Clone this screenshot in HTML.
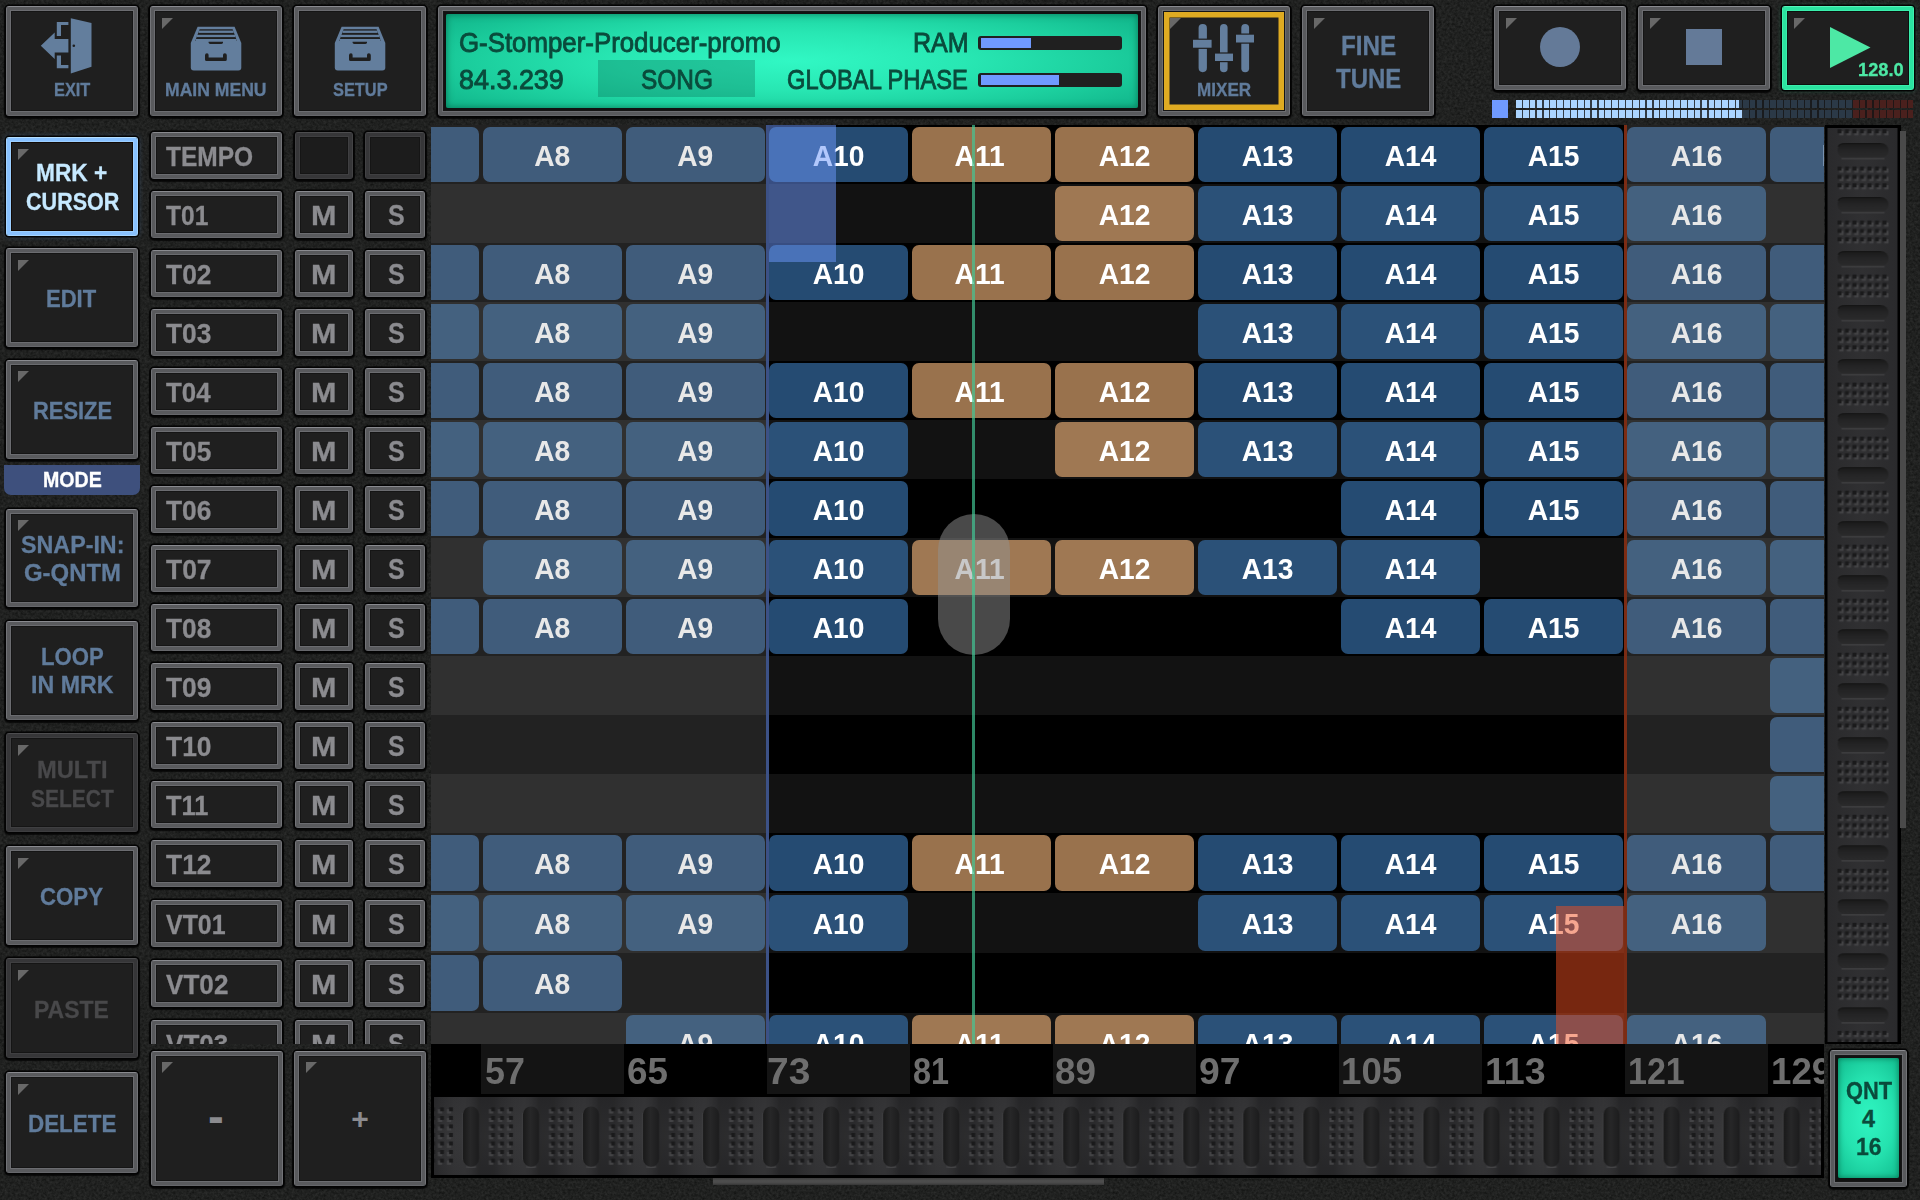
<!DOCTYPE html><html><head><meta charset="utf-8"><title>G-Stomper Song</title><style>
*{margin:0;padding:0;box-sizing:border-box}
html,body{width:1920px;height:1200px;overflow:hidden;background:#202121}
body{position:relative;font-family:"Liberation Sans",sans-serif;font-weight:bold;color:#607b9b}
#bg{position:absolute;left:0;top:0;width:1920px;height:1200px}
.b{position:absolute;background:#1f1f1f;border:1px solid #727377;border-top-color:#898a8f;border-bottom-color:#66676b;border-radius:3px;box-shadow:0 0 0 1.5px #030303,0 1px 1px 2px rgba(5,5,5,.8),inset 0 0 0 3px #595a5d,inset 0 0 0 4px #6b6c70,inset 0 0 0 5px #151515}
.b.dis{border-color:#434345;border-top-color:#4d4d4f;border-bottom-color:#3e3e40;box-shadow:0 0 0 1.5px #030303,0 1px 1px 2px rgba(5,5,5,.8),inset 0 0 0 3px #363638,inset 0 0 0 4px #3f3f41,inset 0 0 0 5px #151515}
.b.sel{border-color:#a4d4ff;border-top-color:#b4deff;border-bottom-color:#a4d4ff;box-shadow:0 0 0 1.5px #030303,0 0 5px 1px rgba(120,180,255,.3),inset 0 0 0 3px #88c1ff,inset 0 0 0 4px #9ccfff,inset 0 0 0 5px #120a05}
.b.yel{box-shadow:0 0 0 1.5px #030303,0 1px 1px 2px rgba(5,5,5,.8),inset 0 0 0 3px #595a5d,inset 0 0 0 4px #6b6c70,inset 0 0 0 5px #151515,inset 0 0 0 10.5px #dfab22}
.b.grn{border-color:#3ff0ae;border-top-color:#55f5ba;border-bottom-color:#3ff0ae;box-shadow:0 0 0 1.5px #030303,0 0 4px 1px rgba(60,240,170,.25),inset 0 0 0 3px #2be3a0,inset 0 0 0 4px #3aeeac,inset 0 0 0 5px #0a120e}
.tri{position:absolute;left:10.7px;top:10.7px;width:0;height:0;border-top:11.5px solid #686868;border-right:11.5px solid transparent}
.t{position:absolute;white-space:nowrap;transform-origin:0 0;line-height:1}
.ic{position:absolute;left:4px;top:4px}
#grid{position:absolute;left:431px;top:125px;width:1393px;height:919px;overflow:hidden;background:#262626}
.row{position:absolute;left:0;width:1393px;height:59px}
.blk{position:absolute;height:55px;width:139px;border-radius:7px;color:#e4e4e4;font-size:30px;line-height:57.6px;text-align:center;overflow:hidden}
.blk span{display:inline-block;transform:scaleX(.94)}
.lb{background:#405c7b;color:#e8e8e8}
.db{background:#254b72;color:#fff}
.or{background:#99724d;color:#fff}
.lb.o{background:#44617f}
.db.o{background:#2b5178}
.or.o{background:#9f7853}
#tracks{position:absolute;left:145px;top:125px;width:286px;height:919px;overflow:hidden}
#ruler{position:absolute;left:431px;top:1044px;width:1393px;height:50px;overflow:hidden;background:#000}
</style></head><body>
<svg id="bg" width="1920" height="1200"><defs>
<filter id="nz" x="0" y="0" width="100%" height="100%" color-interpolation-filters="sRGB"><feTurbulence type="fractalNoise" baseFrequency="0.38" numOctaves="3" seed="7"/><feColorMatrix type="matrix" values="0.13 0 0 0 0.061  0.13 0 0 0 0.065  0.13 0 0 0 0.061  0 0 0 0 1"/></filter>
</defs><rect width="1920" height="1200" fill="#222322" filter="url(#nz)"/></svg>
<div class="b " style="left:6px;top:6px;width:132px;height:110px"><svg class="ic" width="122" height="100" viewBox="11 11 122 100"><g fill="#637e9d">
<polygon points="70.8,18.2 91.5,23.1 91.5,66.7 70.8,73.4"/>
<polygon points="40.8,45.7 54.7,32.6 54.7,39 68.4,39 68.4,52.6 54.7,52.6 54.7,59"/>
<path d="M56.8 21.9H68.4V25.1H61V36H56.8Z"/>
<path d="M56.8 68.3H68.4V64.9H61V55.6H56.8Z"/></g>
<circle cx="73.8" cy="45.7" r="1.3" fill="#1f1f1f"/></svg></div>
<div class="t" style="left:53.61px;top:81.57px;font-size:17.76px;transform:scaleX(0.921);-webkit-text-stroke:0.3px;">EXIT</div>
<div class="b " style="left:150px;top:6px;width:132px;height:110px"><i class="tri"></i><svg class="ic" width="122" height="100" viewBox="155 11 122 100"><g fill="#637e9d">
<path d="M197.6 26.8H234.6L241.3 43V67.6Q241.3 70.6 238.3 70.6H193.8Q190.8 70.6 190.8 67.6V43Z"/></g>
<path d="M199.6 29.2H232.6L237 41H195.2Z" fill="#1f1f1f"/>
<g fill="#637e9d"><rect x="198.6" y="30.6" width="35" height="2.3"/><rect x="197" y="34.8" width="38.2" height="2.3"/><rect x="195.6" y="39" width="41" height="2.3"/></g>
<path d="M208.6 41.8H223V42.6Q223 44 221.4 44H210.2Q208.6 44 208.6 42.6Z" fill="#1f1f1f"/>
<path d="M205 55.2Q205 53.2 207 53.2Q208.6 53.2 208.6 55V57.4H223V55Q223 53.2 224.8 53.2Q226.8 53.2 226.8 55.2V59.4Q226.8 61 225.2 61H206.6Q205 61 205 59.4Z" fill="#1f1f1f"/>
</svg></div>
<div class="t" style="left:165.33px;top:81.69px;font-size:17.61px;transform:scaleX(0.998);-webkit-text-stroke:0.3px;">MAIN MENU</div>
<div class="b " style="left:294px;top:6px;width:132px;height:110px"><svg class="ic" width="122" height="100" viewBox="155 11 122 100"><g fill="#637e9d">
<path d="M197.6 26.8H234.6L241.3 43V67.6Q241.3 70.6 238.3 70.6H193.8Q190.8 70.6 190.8 67.6V43Z"/></g>
<path d="M199.6 29.2H232.6L237 41H195.2Z" fill="#1f1f1f"/>
<g fill="#637e9d"><rect x="198.6" y="30.6" width="35" height="2.3"/><rect x="197" y="34.8" width="38.2" height="2.3"/><rect x="195.6" y="39" width="41" height="2.3"/></g>
<path d="M208.6 41.8H223V42.6Q223 44 221.4 44H210.2Q208.6 44 208.6 42.6Z" fill="#1f1f1f"/>
<path d="M205 55.2Q205 53.2 207 53.2Q208.6 53.2 208.6 55V57.4H223V55Q223 53.2 224.8 53.2Q226.8 53.2 226.8 55.2V59.4Q226.8 61 225.2 61H206.6Q205 61 205 59.4Z" fill="#1f1f1f"/>
</svg></div>
<div class="t" style="left:332.91px;top:81.69px;font-size:17.61px;transform:scaleX(0.929);-webkit-text-stroke:0.3px;">SETUP</div>
<div class="b" style="left:438px;top:6px;width:708px;height:110px;background:#111"></div>
<div id="lcd" style="position:absolute;left:446px;top:14px;width:692px;height:94px;border-radius:2px;color:#0a4b3c;
background:radial-gradient(ellipse 76% 92% at 50% 50%,#31f8c4 0%,#28e7b3 33%,#1ccf9e 60%,#10b389 86%,#0aa57c 100%);box-shadow:inset 0 0 6px 1px rgba(0,90,60,.55)">
<div style="position:absolute;left:152px;top:46px;width:157px;height:37px;background:rgba(10,110,85,.33)"></div>
<div style="position:absolute;left:532px;top:22px;width:144px;height:14px;border-radius:3px;background:#202020"><div style="position:absolute;left:3px;top:2px;width:50px;height:10px;background:#709aff"></div></div>
<div style="position:absolute;left:532px;top:59px;width:144px;height:14px;border-radius:3px;background:#202020"><div style="position:absolute;left:3px;top:2px;width:78px;height:10px;background:#709aff"></div></div>
<div class="t" style="left:12.61px;top:14.62px;font-size:28.09px;transform:scaleX(0.920);color:#0a4b3c;font-weight:normal;-webkit-text-stroke:0.9px;">G-Stomper-Producer-promo</div>
<div class="t" style="left:12.73px;top:52.18px;font-size:27.07px;transform:scaleX(0.995);color:#0a4b3c;font-weight:normal;-webkit-text-stroke:0.9px;">84.3.239</div>
<div class="t" style="left:194.66px;top:51.74px;font-size:27.95px;transform:scaleX(0.874);color:#0a4b3c;font-weight:normal;-webkit-text-stroke:0.9px;">SONG</div>
<div class="t" style="left:467.31px;top:14.37px;font-size:28.38px;transform:scaleX(0.884);color:#0a4b3c;font-weight:normal;-webkit-text-stroke:0.9px;">RAM</div>
<div class="t" style="left:341.01px;top:51.74px;font-size:27.95px;transform:scaleX(0.848);color:#0a4b3c;font-weight:normal;-webkit-text-stroke:0.9px;">GLOBAL PHASE</div>
</div>
<div class="b yel" style="left:1158px;top:6px;width:132px;height:110px"><i class="tri"></i><svg class="ic" width="122" height="100" viewBox="1163 11 122 100"><g fill="#637e9d">
<rect x="1198.6" y="23.9" width="8.3" height="48.3" rx="4.1"/><rect x="1220" y="23.9" width="7.6" height="48.3" rx="3.8"/><rect x="1241.3" y="23.9" width="7.8" height="48.3" rx="3.9"/></g>
<g fill="#1f1f1f"><rect x="1193" y="38.6" width="18.6" height="10.3"/><rect x="1215" y="52.4" width="18" height="9.8"/><rect x="1236" y="33.5" width="18" height="10.2"/></g>
<g fill="#637e9d"><rect x="1193" y="39.8" width="18.6" height="7.9"/><rect x="1215" y="53.6" width="18" height="7.4"/><rect x="1236" y="34.7" width="18" height="7.8"/></g></svg></div>
<div class="t" style="left:1197.46px;top:81.69px;font-size:17.61px;transform:scaleX(0.971);-webkit-text-stroke:0.3px;">MIXER</div>
<div class="b " style="left:1302px;top:6px;width:132px;height:110px"><i class="tri"></i></div>
<div class="t" style="left:1340.68px;top:32.93px;font-size:26.78px;transform:scaleX(0.907);-webkit-text-stroke:0.3px;">FINE</div>
<div class="t" style="left:1336.26px;top:64.58px;font-size:27.07px;transform:scaleX(0.886);-webkit-text-stroke:0.3px;">TUNE</div>
<div class="b " style="left:1494px;top:6px;width:132px;height:84px"><i class="tri"></i><div style="position:absolute;left:45px;top:20px;width:40px;height:40px;border-radius:50%;background:#647a98"></div></div>
<div class="b " style="left:1638px;top:6px;width:132px;height:84px"><i class="tri"></i><div style="position:absolute;left:47px;top:22px;width:36px;height:36px;background:#647a98"></div></div>
<div class="b grn" style="left:1782px;top:6px;width:132px;height:84px"><i class="tri"></i><svg class="ic" width="122" height="74" viewBox="1787 11 122 74"><polygon points="1830,27 1870.5,47.5 1830,68" fill="#4de8a5"/></svg></div>
<div class="t" style="left:1857.84px;top:61.81px;font-size:17.47px;transform:scaleX(1.045);color:#4de8a5;-webkit-text-stroke:0.3px;">128.0</div>
<div style="position:absolute;left:1492px;top:100px;width:16px;height:18px;background:#709aff"></div>
<div style="position:absolute;left:1515.7px;top:100px;width:397.55px;height:8px;background:repeating-linear-gradient(90deg,rgba(0,0,0,0) 0,rgba(0,0,0,0) 5.7px,rgba(20,20,20,.8) 5.7px,rgba(20,20,20,.8) 6.875px),linear-gradient(90deg,#abd4ff 0,#abd4ff 223.438px,#2b3947 223.438px,#2b3947 336.875px,#4a201d 336.875px)"></div>
<div style="position:absolute;left:1515.7px;top:110px;width:397.55px;height:8px;background:repeating-linear-gradient(90deg,rgba(0,0,0,0) 0,rgba(0,0,0,0) 5.7px,rgba(20,20,20,.8) 5.7px,rgba(20,20,20,.8) 6.875px),linear-gradient(90deg,#abd4ff 0,#abd4ff 226.875px,#2b3947 226.875px,#2b3947 336.875px,#4a201d 336.875px)"></div>
<div class="b sel" style="left:6px;top:137px;width:132px;height:99px"><i class="tri"></i></div>
<div class="t" style="left:36.49px;top:161.15px;font-size:24.16px;transform:scaleX(0.939);color:#c6e9ff;-webkit-text-stroke:0.3px;">MRK +</div>
<div class="t" style="left:25.74px;top:190.22px;font-size:24.31px;transform:scaleX(0.887);color:#c6e9ff;-webkit-text-stroke:0.3px;">CURSOR</div>
<div class="b " style="left:6px;top:248px;width:132px;height:99px"><i class="tri"></i></div>
<div class="t" style="left:46.23px;top:287.00px;font-size:24.45px;transform:scaleX(0.902);-webkit-text-stroke:0.3px;">EDIT</div>
<div class="b " style="left:6px;top:359.5px;width:132px;height:99px"><i class="tri"></i></div>
<div class="t" style="left:33.34px;top:398.50px;font-size:24.45px;transform:scaleX(0.896);-webkit-text-stroke:0.3px;">RESIZE</div>
<div style="position:absolute;left:4px;top:465px;width:136px;height:30px;border-radius:0 0 7px 7px;background:#3e507d"></div>
<div class="t" style="left:42.69px;top:469.15px;font-size:22.27px;transform:scaleX(0.881);color:#fff;-webkit-text-stroke:0.3px;">MODE</div>
<div class="b " style="left:6px;top:508.5px;width:132px;height:98.5px"><i class="tri"></i></div>
<div class="t" style="left:21.30px;top:534.34px;font-size:23.58px;transform:scaleX(0.987);-webkit-text-stroke:0.3px;">SNAP-IN:</div>
<div class="t" style="left:24.04px;top:562.12px;font-size:23.73px;transform:scaleX(1.008);-webkit-text-stroke:0.3px;">G-QNTM</div>
<div class="b " style="left:6px;top:621px;width:132px;height:98.5px"></div>
<div class="t" style="left:41.02px;top:644.59px;font-size:23.87px;transform:scaleX(0.927);-webkit-text-stroke:0.3px;">LOOP</div>
<div class="t" style="left:31.45px;top:673.29px;font-size:23.87px;transform:scaleX(0.972);-webkit-text-stroke:0.3px;">IN MRK</div>
<div class="b dis" style="left:6px;top:733px;width:132px;height:99px"><i class="tri"></i></div>
<div class="t" style="left:37.22px;top:757.85px;font-size:24.16px;transform:scaleX(0.980);color:#48484a;-webkit-text-stroke:0.3px;">MULTI</div>
<div class="t" style="left:31.17px;top:786.65px;font-size:24.16px;transform:scaleX(0.868);color:#48484a;-webkit-text-stroke:0.3px;">SELECT</div>
<div class="b " style="left:6px;top:846px;width:132px;height:98.5px"><i class="tri"></i></div>
<div class="t" style="left:40.41px;top:884.60px;font-size:24.45px;transform:scaleX(0.909);-webkit-text-stroke:0.3px;">COPY</div>
<div class="b dis" style="left:6px;top:958px;width:132px;height:100px"><i class="tri"></i></div>
<div class="t" style="left:33.97px;top:997.82px;font-size:24.31px;transform:scaleX(0.946);color:#48484a;-webkit-text-stroke:0.3px;">PASTE</div>
<div class="b " style="left:6px;top:1072px;width:132px;height:101px"><i class="tri"></i></div>
<div class="t" style="left:28.01px;top:1111.62px;font-size:24.31px;transform:scaleX(0.922);-webkit-text-stroke:0.3px;">DELETE</div>
<div id="tracks">
<div class="b" style="left:6px;top:6.5px;width:131px;height:47px"></div>
<div class="t" style="left:20.55px;top:17.17px;font-size:28.38px;transform:scaleX(0.864);color:#8b8b8f;-webkit-text-stroke:0.3px;">TEMPO</div>
<div class="b dis" style="left:149.5px;top:6.5px;width:58.5px;height:47px;background:#1c1c1c"></div>
<div class="b dis" style="left:220px;top:6.5px;width:60px;height:47px;background:#1c1c1c"></div>
<div class="b" style="left:6px;top:65.5px;width:131px;height:47px"></div>
<div class="t" style="left:20.55px;top:76.17px;font-size:28.38px;transform:scaleX(0.866);color:#8b8b8f;-webkit-text-stroke:0.3px;">T01</div>
<div class="b" style="left:149.5px;top:65.5px;width:58.5px;height:47px"></div>
<div class="b" style="left:220px;top:65.5px;width:60px;height:47px"></div>
<div class="t" style="left:166.06px;top:76.17px;font-size:28.38px;transform:scaleX(1.077);color:#8b8b8f;-webkit-text-stroke:0.3px;">M</div>
<div class="t" style="left:242.65px;top:75.73px;font-size:29.26px;transform:scaleX(0.854);color:#8b8b8f;-webkit-text-stroke:0.3px;">S</div>
<div class="b" style="left:6px;top:124.5px;width:131px;height:47px"></div>
<div class="t" style="left:20.54px;top:135.17px;font-size:28.38px;transform:scaleX(0.931);color:#8b8b8f;-webkit-text-stroke:0.3px;">T02</div>
<div class="b" style="left:149.5px;top:124.5px;width:58.5px;height:47px"></div>
<div class="b" style="left:220px;top:124.5px;width:60px;height:47px"></div>
<div class="t" style="left:166.06px;top:135.17px;font-size:28.38px;transform:scaleX(1.077);color:#8b8b8f;-webkit-text-stroke:0.3px;">M</div>
<div class="t" style="left:242.65px;top:134.73px;font-size:29.26px;transform:scaleX(0.854);color:#8b8b8f;-webkit-text-stroke:0.3px;">S</div>
<div class="b" style="left:6px;top:183.5px;width:131px;height:47px"></div>
<div class="t" style="left:20.54px;top:194.17px;font-size:28.38px;transform:scaleX(0.929);color:#8b8b8f;-webkit-text-stroke:0.3px;">T03</div>
<div class="b" style="left:149.5px;top:183.5px;width:58.5px;height:47px"></div>
<div class="b" style="left:220px;top:183.5px;width:60px;height:47px"></div>
<div class="t" style="left:166.06px;top:194.17px;font-size:28.38px;transform:scaleX(1.077);color:#8b8b8f;-webkit-text-stroke:0.3px;">M</div>
<div class="t" style="left:242.65px;top:193.73px;font-size:29.26px;transform:scaleX(0.854);color:#8b8b8f;-webkit-text-stroke:0.3px;">S</div>
<div class="b" style="left:6px;top:242.5px;width:131px;height:47px"></div>
<div class="t" style="left:20.54px;top:253.17px;font-size:28.38px;transform:scaleX(0.912);color:#8b8b8f;-webkit-text-stroke:0.3px;">T04</div>
<div class="b" style="left:149.5px;top:242.5px;width:58.5px;height:47px"></div>
<div class="b" style="left:220px;top:242.5px;width:60px;height:47px"></div>
<div class="t" style="left:166.06px;top:253.17px;font-size:28.38px;transform:scaleX(1.077);color:#8b8b8f;-webkit-text-stroke:0.3px;">M</div>
<div class="t" style="left:242.65px;top:252.73px;font-size:29.26px;transform:scaleX(0.854);color:#8b8b8f;-webkit-text-stroke:0.3px;">S</div>
<div class="b" style="left:6px;top:301.5px;width:131px;height:47px"></div>
<div class="t" style="left:20.54px;top:312.17px;font-size:28.38px;transform:scaleX(0.925);color:#8b8b8f;-webkit-text-stroke:0.3px;">T05</div>
<div class="b" style="left:149.5px;top:301.5px;width:58.5px;height:47px"></div>
<div class="b" style="left:220px;top:301.5px;width:60px;height:47px"></div>
<div class="t" style="left:166.06px;top:312.17px;font-size:28.38px;transform:scaleX(1.077);color:#8b8b8f;-webkit-text-stroke:0.3px;">M</div>
<div class="t" style="left:242.65px;top:311.73px;font-size:29.26px;transform:scaleX(0.854);color:#8b8b8f;-webkit-text-stroke:0.3px;">S</div>
<div class="b" style="left:6px;top:360.5px;width:131px;height:47px"></div>
<div class="t" style="left:20.54px;top:371.17px;font-size:28.38px;transform:scaleX(0.929);color:#8b8b8f;-webkit-text-stroke:0.3px;">T06</div>
<div class="b" style="left:149.5px;top:360.5px;width:58.5px;height:47px"></div>
<div class="b" style="left:220px;top:360.5px;width:60px;height:47px"></div>
<div class="t" style="left:166.06px;top:371.17px;font-size:28.38px;transform:scaleX(1.077);color:#8b8b8f;-webkit-text-stroke:0.3px;">M</div>
<div class="t" style="left:242.65px;top:370.73px;font-size:29.26px;transform:scaleX(0.854);color:#8b8b8f;-webkit-text-stroke:0.3px;">S</div>
<div class="b" style="left:6px;top:419.5px;width:131px;height:47px"></div>
<div class="t" style="left:20.54px;top:430.17px;font-size:28.38px;transform:scaleX(0.932);color:#8b8b8f;-webkit-text-stroke:0.3px;">T07</div>
<div class="b" style="left:149.5px;top:419.5px;width:58.5px;height:47px"></div>
<div class="b" style="left:220px;top:419.5px;width:60px;height:47px"></div>
<div class="t" style="left:166.06px;top:430.17px;font-size:28.38px;transform:scaleX(1.077);color:#8b8b8f;-webkit-text-stroke:0.3px;">M</div>
<div class="t" style="left:242.65px;top:429.73px;font-size:29.26px;transform:scaleX(0.854);color:#8b8b8f;-webkit-text-stroke:0.3px;">S</div>
<div class="b" style="left:6px;top:478.5px;width:131px;height:47px"></div>
<div class="t" style="left:20.54px;top:489.17px;font-size:28.38px;transform:scaleX(0.925);color:#8b8b8f;-webkit-text-stroke:0.3px;">T08</div>
<div class="b" style="left:149.5px;top:478.5px;width:58.5px;height:47px"></div>
<div class="b" style="left:220px;top:478.5px;width:60px;height:47px"></div>
<div class="t" style="left:166.06px;top:489.17px;font-size:28.38px;transform:scaleX(1.077);color:#8b8b8f;-webkit-text-stroke:0.3px;">M</div>
<div class="t" style="left:242.65px;top:488.73px;font-size:29.26px;transform:scaleX(0.854);color:#8b8b8f;-webkit-text-stroke:0.3px;">S</div>
<div class="b" style="left:6px;top:537.5px;width:131px;height:47px"></div>
<div class="t" style="left:20.54px;top:548.17px;font-size:28.38px;transform:scaleX(0.929);color:#8b8b8f;-webkit-text-stroke:0.3px;">T09</div>
<div class="b" style="left:149.5px;top:537.5px;width:58.5px;height:47px"></div>
<div class="b" style="left:220px;top:537.5px;width:60px;height:47px"></div>
<div class="t" style="left:166.06px;top:548.17px;font-size:28.38px;transform:scaleX(1.077);color:#8b8b8f;-webkit-text-stroke:0.3px;">M</div>
<div class="t" style="left:242.65px;top:547.73px;font-size:29.26px;transform:scaleX(0.854);color:#8b8b8f;-webkit-text-stroke:0.3px;">S</div>
<div class="b" style="left:6px;top:596.5px;width:131px;height:47px"></div>
<div class="t" style="left:20.54px;top:607.17px;font-size:28.38px;transform:scaleX(0.931);color:#8b8b8f;-webkit-text-stroke:0.3px;">T10</div>
<div class="b" style="left:149.5px;top:596.5px;width:58.5px;height:47px"></div>
<div class="b" style="left:220px;top:596.5px;width:60px;height:47px"></div>
<div class="t" style="left:166.06px;top:607.17px;font-size:28.38px;transform:scaleX(1.077);color:#8b8b8f;-webkit-text-stroke:0.3px;">M</div>
<div class="t" style="left:242.65px;top:606.73px;font-size:29.26px;transform:scaleX(0.854);color:#8b8b8f;-webkit-text-stroke:0.3px;">S</div>
<div class="b" style="left:6px;top:655.5px;width:131px;height:47px"></div>
<div class="t" style="left:20.55px;top:666.17px;font-size:28.38px;transform:scaleX(0.895);color:#8b8b8f;-webkit-text-stroke:0.3px;">T11</div>
<div class="b" style="left:149.5px;top:655.5px;width:58.5px;height:47px"></div>
<div class="b" style="left:220px;top:655.5px;width:60px;height:47px"></div>
<div class="t" style="left:166.06px;top:666.17px;font-size:28.38px;transform:scaleX(1.077);color:#8b8b8f;-webkit-text-stroke:0.3px;">M</div>
<div class="t" style="left:242.65px;top:665.73px;font-size:29.26px;transform:scaleX(0.854);color:#8b8b8f;-webkit-text-stroke:0.3px;">S</div>
<div class="b" style="left:6px;top:714.5px;width:131px;height:47px"></div>
<div class="t" style="left:20.54px;top:725.17px;font-size:28.38px;transform:scaleX(0.931);color:#8b8b8f;-webkit-text-stroke:0.3px;">T12</div>
<div class="b" style="left:149.5px;top:714.5px;width:58.5px;height:47px"></div>
<div class="b" style="left:220px;top:714.5px;width:60px;height:47px"></div>
<div class="t" style="left:166.06px;top:725.17px;font-size:28.38px;transform:scaleX(1.077);color:#8b8b8f;-webkit-text-stroke:0.3px;">M</div>
<div class="t" style="left:242.65px;top:724.73px;font-size:29.26px;transform:scaleX(0.854);color:#8b8b8f;-webkit-text-stroke:0.3px;">S</div>
<div class="b" style="left:6px;top:774.5px;width:131px;height:47.7px"></div>
<div class="t" style="left:20.63px;top:785.17px;font-size:28.38px;transform:scaleX(0.879);color:#8b8b8f;-webkit-text-stroke:0.3px;">VT01</div>
<div class="b" style="left:149.5px;top:774.5px;width:58.5px;height:47.7px"></div>
<div class="b" style="left:220px;top:774.5px;width:60px;height:47.7px"></div>
<div class="t" style="left:166.06px;top:785.17px;font-size:28.38px;transform:scaleX(1.077);color:#8b8b8f;-webkit-text-stroke:0.3px;">M</div>
<div class="t" style="left:242.65px;top:784.73px;font-size:29.26px;transform:scaleX(0.854);color:#8b8b8f;-webkit-text-stroke:0.3px;">S</div>
<div class="b" style="left:6px;top:834.5px;width:131px;height:47.7px"></div>
<div class="t" style="left:20.63px;top:845.17px;font-size:28.38px;transform:scaleX(0.920);color:#8b8b8f;-webkit-text-stroke:0.3px;">VT02</div>
<div class="b" style="left:149.5px;top:834.5px;width:58.5px;height:47.7px"></div>
<div class="b" style="left:220px;top:834.5px;width:60px;height:47.7px"></div>
<div class="t" style="left:166.06px;top:845.17px;font-size:28.38px;transform:scaleX(1.077);color:#8b8b8f;-webkit-text-stroke:0.3px;">M</div>
<div class="t" style="left:242.65px;top:844.73px;font-size:29.26px;transform:scaleX(0.854);color:#8b8b8f;-webkit-text-stroke:0.3px;">S</div>
<div class="b" style="left:6px;top:894.5px;width:131px;height:47.7px"></div>
<div class="t" style="left:20.63px;top:905.17px;font-size:28.38px;transform:scaleX(0.919);color:#8b8b8f;-webkit-text-stroke:0.3px;">VT03</div>
<div class="b" style="left:149.5px;top:894.5px;width:58.5px;height:47.7px"></div>
<div class="b" style="left:220px;top:894.5px;width:60px;height:47.7px"></div>
<div class="t" style="left:166.06px;top:905.17px;font-size:28.38px;transform:scaleX(1.077);color:#8b8b8f;-webkit-text-stroke:0.3px;">M</div>
<div class="t" style="left:242.65px;top:904.73px;font-size:29.26px;transform:scaleX(0.854);color:#8b8b8f;-webkit-text-stroke:0.3px;">S</div>
</div>
<div class="b " style="left:150.5px;top:1050.5px;width:132px;height:135px"><i class="tri"></i></div>
<div class="b " style="left:294px;top:1050.5px;width:132px;height:135px"><i class="tri"></i></div>
<div class="t" style="left:208.11px;top:1092.68px;font-size:47.37px;color:#8b8b8f">-</div>
<div class="t" style="left:351.20px;top:1104.40px;font-size:30.00px;color:#8b8b8f">+</div>
<div id="grid">
<div class="row" style="top:0px;height:59px;background:#222222"></div>
<div class="row" style="top:59px;height:59px;background:#303030"></div>
<div class="row" style="top:118px;height:59px;background:#222222"></div>
<div class="row" style="top:177px;height:59px;background:#303030"></div>
<div class="row" style="top:236px;height:59px;background:#222222"></div>
<div class="row" style="top:295px;height:59px;background:#303030"></div>
<div class="row" style="top:354px;height:59px;background:#222222"></div>
<div class="row" style="top:413px;height:59px;background:#303030"></div>
<div class="row" style="top:472px;height:59px;background:#222222"></div>
<div class="row" style="top:531px;height:59px;background:#303030"></div>
<div class="row" style="top:590px;height:59px;background:#222222"></div>
<div class="row" style="top:649px;height:59px;background:#303030"></div>
<div class="row" style="top:708px;height:60px;background:#222222"></div>
<div class="row" style="top:768px;height:60px;background:#303030"></div>
<div class="row" style="top:828px;height:60px;background:#222222"></div>
<div class="row" style="top:888px;height:60px;background:#303030"></div>
<div class="row" style="top:0px;height:59px;left:337px;width:856px;background:#000"></div>
<div class="row" style="top:59px;height:59px;left:337px;width:856px;background:#121212"></div>
<div class="row" style="top:118px;height:59px;left:337px;width:856px;background:#000"></div>
<div class="row" style="top:177px;height:59px;left:337px;width:856px;background:#121212"></div>
<div class="row" style="top:236px;height:59px;left:337px;width:856px;background:#000"></div>
<div class="row" style="top:295px;height:59px;left:337px;width:856px;background:#121212"></div>
<div class="row" style="top:354px;height:59px;left:337px;width:856px;background:#000"></div>
<div class="row" style="top:413px;height:59px;left:337px;width:856px;background:#121212"></div>
<div class="row" style="top:472px;height:59px;left:337px;width:856px;background:#000"></div>
<div class="row" style="top:531px;height:59px;left:337px;width:856px;background:#121212"></div>
<div class="row" style="top:590px;height:59px;left:337px;width:856px;background:#000"></div>
<div class="row" style="top:649px;height:59px;left:337px;width:856px;background:#121212"></div>
<div class="row" style="top:708px;height:60px;left:337px;width:856px;background:#000"></div>
<div class="row" style="top:768px;height:60px;left:337px;width:856px;background:#121212"></div>
<div class="row" style="top:828px;height:60px;left:337px;width:856px;background:#000"></div>
<div class="row" style="top:888px;height:60px;left:337px;width:856px;background:#121212"></div>
<div class="blk lb" style="left:-91px;top:2px"></div>
<div class="blk lb" style="left:52px;top:2px"><span>A8</span></div>
<div class="blk lb" style="left:195px;top:2px"><span>A9</span></div>
<div class="blk db" style="left:338px;top:2px"><span>A10</span></div>
<div class="blk or" style="left:481px;top:2px"><span style="margin-left:-4px">A11</span></div>
<div class="blk or" style="left:624px;top:2px"><span>A12</span></div>
<div class="blk db" style="left:767px;top:2px"><span>A13</span></div>
<div class="blk db" style="left:910px;top:2px"><span>A14</span></div>
<div class="blk db" style="left:1053px;top:2px"><span>A15</span></div>
<div class="blk lb" style="left:1196px;top:2px"><span>A16</span></div>
<div class="blk lb" style="left:1339px;top:2px"></div>
<div class="blk or o" style="left:624px;top:61px"><span>A12</span></div>
<div class="blk db o" style="left:767px;top:61px"><span>A13</span></div>
<div class="blk db o" style="left:910px;top:61px"><span>A14</span></div>
<div class="blk db o" style="left:1053px;top:61px"><span>A15</span></div>
<div class="blk lb o" style="left:1196px;top:61px"><span>A16</span></div>
<div class="blk lb" style="left:-91px;top:120px"></div>
<div class="blk lb" style="left:52px;top:120px"><span>A8</span></div>
<div class="blk lb" style="left:195px;top:120px"><span>A9</span></div>
<div class="blk db" style="left:338px;top:120px"><span>A10</span></div>
<div class="blk or" style="left:481px;top:120px"><span style="margin-left:-4px">A11</span></div>
<div class="blk or" style="left:624px;top:120px"><span>A12</span></div>
<div class="blk db" style="left:767px;top:120px"><span>A13</span></div>
<div class="blk db" style="left:910px;top:120px"><span>A14</span></div>
<div class="blk db" style="left:1053px;top:120px"><span>A15</span></div>
<div class="blk lb" style="left:1196px;top:120px"><span>A16</span></div>
<div class="blk lb" style="left:1339px;top:120px"></div>
<div class="blk lb o" style="left:-91px;top:179px"></div>
<div class="blk lb o" style="left:52px;top:179px"><span>A8</span></div>
<div class="blk lb o" style="left:195px;top:179px"><span>A9</span></div>
<div class="blk db o" style="left:767px;top:179px"><span>A13</span></div>
<div class="blk db o" style="left:910px;top:179px"><span>A14</span></div>
<div class="blk db o" style="left:1053px;top:179px"><span>A15</span></div>
<div class="blk lb o" style="left:1196px;top:179px"><span>A16</span></div>
<div class="blk lb o" style="left:1339px;top:179px"></div>
<div class="blk lb" style="left:-91px;top:238px"></div>
<div class="blk lb" style="left:52px;top:238px"><span>A8</span></div>
<div class="blk lb" style="left:195px;top:238px"><span>A9</span></div>
<div class="blk db" style="left:338px;top:238px"><span>A10</span></div>
<div class="blk or" style="left:481px;top:238px"><span style="margin-left:-4px">A11</span></div>
<div class="blk or" style="left:624px;top:238px"><span>A12</span></div>
<div class="blk db" style="left:767px;top:238px"><span>A13</span></div>
<div class="blk db" style="left:910px;top:238px"><span>A14</span></div>
<div class="blk db" style="left:1053px;top:238px"><span>A15</span></div>
<div class="blk lb" style="left:1196px;top:238px"><span>A16</span></div>
<div class="blk lb" style="left:1339px;top:238px"></div>
<div class="blk lb o" style="left:-91px;top:297px"></div>
<div class="blk lb o" style="left:52px;top:297px"><span>A8</span></div>
<div class="blk lb o" style="left:195px;top:297px"><span>A9</span></div>
<div class="blk db o" style="left:338px;top:297px"><span>A10</span></div>
<div class="blk or o" style="left:624px;top:297px"><span>A12</span></div>
<div class="blk db o" style="left:767px;top:297px"><span>A13</span></div>
<div class="blk db o" style="left:910px;top:297px"><span>A14</span></div>
<div class="blk db o" style="left:1053px;top:297px"><span>A15</span></div>
<div class="blk lb o" style="left:1196px;top:297px"><span>A16</span></div>
<div class="blk lb o" style="left:1339px;top:297px"></div>
<div class="blk lb" style="left:-91px;top:356px"></div>
<div class="blk lb" style="left:52px;top:356px"><span>A8</span></div>
<div class="blk lb" style="left:195px;top:356px"><span>A9</span></div>
<div class="blk db" style="left:338px;top:356px"><span>A10</span></div>
<div class="blk db" style="left:910px;top:356px"><span>A14</span></div>
<div class="blk db" style="left:1053px;top:356px"><span>A15</span></div>
<div class="blk lb" style="left:1196px;top:356px"><span>A16</span></div>
<div class="blk lb" style="left:1339px;top:356px"></div>
<div class="blk lb o" style="left:52px;top:415px"><span>A8</span></div>
<div class="blk lb o" style="left:195px;top:415px"><span>A9</span></div>
<div class="blk db o" style="left:338px;top:415px"><span>A10</span></div>
<div class="blk or o" style="left:481px;top:415px"><span style="margin-left:-4px">A11</span></div>
<div class="blk or o" style="left:624px;top:415px"><span>A12</span></div>
<div class="blk db o" style="left:767px;top:415px"><span>A13</span></div>
<div class="blk db o" style="left:910px;top:415px"><span>A14</span></div>
<div class="blk lb o" style="left:1196px;top:415px"><span>A16</span></div>
<div class="blk lb o" style="left:1339px;top:415px"></div>
<div class="blk lb" style="left:-91px;top:474px"></div>
<div class="blk lb" style="left:52px;top:474px"><span>A8</span></div>
<div class="blk lb" style="left:195px;top:474px"><span>A9</span></div>
<div class="blk db" style="left:338px;top:474px"><span>A10</span></div>
<div class="blk db" style="left:910px;top:474px"><span>A14</span></div>
<div class="blk db" style="left:1053px;top:474px"><span>A15</span></div>
<div class="blk lb" style="left:1196px;top:474px"><span>A16</span></div>
<div class="blk lb" style="left:1339px;top:474px"></div>
<div class="blk lb o" style="left:1339px;top:533px"></div>
<div class="blk lb" style="left:1339px;top:592px"></div>
<div class="blk lb o" style="left:1339px;top:651px"></div>
<div class="blk lb" style="left:-91px;top:710px;height:56px;line-height:58.6px"></div>
<div class="blk lb" style="left:52px;top:710px;height:56px;line-height:58.6px"><span>A8</span></div>
<div class="blk lb" style="left:195px;top:710px;height:56px;line-height:58.6px"><span>A9</span></div>
<div class="blk db" style="left:338px;top:710px;height:56px;line-height:58.6px"><span>A10</span></div>
<div class="blk or" style="left:481px;top:710px;height:56px;line-height:58.6px"><span style="margin-left:-4px">A11</span></div>
<div class="blk or" style="left:624px;top:710px;height:56px;line-height:58.6px"><span>A12</span></div>
<div class="blk db" style="left:767px;top:710px;height:56px;line-height:58.6px"><span>A13</span></div>
<div class="blk db" style="left:910px;top:710px;height:56px;line-height:58.6px"><span>A14</span></div>
<div class="blk db" style="left:1053px;top:710px;height:56px;line-height:58.6px"><span>A15</span></div>
<div class="blk lb" style="left:1196px;top:710px;height:56px;line-height:58.6px"><span>A16</span></div>
<div class="blk lb" style="left:1339px;top:710px;height:56px;line-height:58.6px"></div>
<div class="blk lb o" style="left:-91px;top:770px;height:56px;line-height:58.6px"></div>
<div class="blk lb o" style="left:52px;top:770px;height:56px;line-height:58.6px"><span>A8</span></div>
<div class="blk lb o" style="left:195px;top:770px;height:56px;line-height:58.6px"><span>A9</span></div>
<div class="blk db o" style="left:338px;top:770px;height:56px;line-height:58.6px"><span>A10</span></div>
<div class="blk db o" style="left:767px;top:770px;height:56px;line-height:58.6px"><span>A13</span></div>
<div class="blk db o" style="left:910px;top:770px;height:56px;line-height:58.6px"><span>A14</span></div>
<div class="blk db o" style="left:1053px;top:770px;height:56px;line-height:58.6px"><span>A15</span></div>
<div class="blk lb o" style="left:1196px;top:770px;height:56px;line-height:58.6px"><span>A16</span></div>
<div class="blk lb" style="left:-91px;top:830px;height:56px;line-height:58.6px"></div>
<div class="blk lb" style="left:52px;top:830px;height:56px;line-height:58.6px"><span>A8</span></div>
<div class="blk lb o" style="left:195px;top:890px;height:56px;line-height:58.6px"><span>A9</span></div>
<div class="blk db o" style="left:338px;top:890px;height:56px;line-height:58.6px"><span>A10</span></div>
<div class="blk or o" style="left:481px;top:890px;height:56px;line-height:58.6px"><span style="margin-left:-4px">A11</span></div>
<div class="blk or o" style="left:624px;top:890px;height:56px;line-height:58.6px"><span>A12</span></div>
<div class="blk db o" style="left:767px;top:890px;height:56px;line-height:58.6px"><span>A13</span></div>
<div class="blk db o" style="left:910px;top:890px;height:56px;line-height:58.6px"><span>A14</span></div>
<div class="blk db o" style="left:1053px;top:890px;height:56px;line-height:58.6px"><span>A15</span></div>
<div class="blk lb o" style="left:1196px;top:890px;height:56px;line-height:58.6px"><span>A16</span></div>
<div style="position:absolute;left:335px;top:0;width:70px;height:137px;background:rgba(108,150,250,.52)"></div>
<div style="position:absolute;left:335px;top:0;width:2.5px;height:919px;background:#3c5186"></div>
<div style="position:absolute;left:1125px;top:781px;width:71px;height:138px;background:rgba(238,78,32,.5)"></div>
<div style="position:absolute;left:1193px;top:0;width:3px;height:919px;background:#7c2c14"></div>
<div style="position:absolute;left:1391.5px;top:20px;width:1.5px;height:21px;background:rgba(205,225,255,.4)"></div>
<div style="position:absolute;left:507px;top:389px;width:72px;height:141px;border-radius:36px;background:rgba(146,146,146,.5)"></div>
<div style="position:absolute;left:541px;top:0;width:3px;height:919px;background:rgba(66,200,150,.68)"></div>
</div>
<div id="ruler">
<div style="position:absolute;left:50px;top:0;width:143px;height:50px;background:#141414"></div>
<div class="t" style="left:54.22px;top:9.16px;font-size:37.85px;transform:scaleX(0.948);color:#6e6e6e;">57</div>
<div style="position:absolute;left:193px;top:0;width:143px;height:50px;background:#000"></div>
<div class="t" style="left:195.65px;top:9.16px;font-size:37.85px;transform:scaleX(0.974);color:#6e6e6e;">65</div>
<div style="position:absolute;left:336px;top:0;width:143px;height:50px;background:#141414"></div>
<div class="t" style="left:336.01px;top:9.16px;font-size:37.85px;transform:scaleX(1.030);color:#6e6e6e;">73</div>
<div style="position:absolute;left:479px;top:0;width:143px;height:50px;background:#000"></div>
<div class="t" style="left:481.92px;top:9.16px;font-size:37.85px;transform:scaleX(0.856);color:#6e6e6e;">81</div>
<div style="position:absolute;left:622px;top:0;width:143px;height:50px;background:#141414"></div>
<div class="t" style="left:624.37px;top:9.16px;font-size:37.85px;transform:scaleX(0.973);color:#6e6e6e;">89</div>
<div style="position:absolute;left:765px;top:0;width:143px;height:50px;background:#000"></div>
<div class="t" style="left:767.76px;top:9.16px;font-size:37.85px;transform:scaleX(0.984);color:#6e6e6e;">97</div>
<div style="position:absolute;left:908px;top:0;width:143px;height:50px;background:#141414"></div>
<div class="t" style="left:910.48px;top:9.16px;font-size:37.85px;transform:scaleX(0.969);color:#6e6e6e;">105</div>
<div style="position:absolute;left:1051px;top:0;width:143px;height:50px;background:#000"></div>
<div class="t" style="left:1053.61px;top:9.16px;font-size:37.85px;transform:scaleX(0.995);color:#6e6e6e;">113</div>
<div style="position:absolute;left:1194px;top:0;width:143px;height:50px;background:#141414"></div>
<div class="t" style="left:1196.84px;top:9.16px;font-size:37.85px;transform:scaleX(0.900);color:#6e6e6e;">121</div>
<div style="position:absolute;left:1337px;top:0;width:143px;height:50px;background:#000"></div>
<div class="t" style="left:1340.08px;top:9.16px;font-size:37.85px;transform:scaleX(0.969);color:#6e6e6e;">129</div>
</div>
<svg style="position:absolute;left:1824.5px;top:125px" width="76" height="919" viewBox="0.5 0 76 919"><defs>
<linearGradient id="vpg" x1="0" x2="0" y1="0" y2="1"><stop offset="0" stop-color="#191919"/><stop offset=".5" stop-color="#242425"/><stop offset="1" stop-color="#2a2a2b"/></linearGradient><linearGradient id="vg" x1="0" x2="1" y1="0" y2="0"><stop offset="0" stop-color="#2a2a2c"/><stop offset=".5" stop-color="#303032"/><stop offset="1" stop-color="#2a2a2c"/></linearGradient>
<pattern id="vp" x="0" y="18" width="73" height="54.02" patternUnits="userSpaceOnUse">
<rect x="13" y="0" width="51" height="15" rx="7.5" fill="url(#vpg)"/>
<path d="M17 15.5H60" stroke="#414143" stroke-width="1.2"/>
<path d="M14 4Q14 0.6 21 0.6H56" stroke="#141414" stroke-width="1.2" fill="none"/>
<rect x="13.0" y="23.5" width="4" height="4" fill="#1a1a1b"/><path d="M14.8 27.7h2.2v-2.2h2v4.2h-4.2z" fill="#434345"/><rect x="20.5" y="23.5" width="4" height="4" fill="#1a1a1b"/><path d="M22.3 27.7h2.2v-2.2h2v4.2h-4.2z" fill="#434345"/><rect x="28.0" y="23.5" width="4" height="4" fill="#1a1a1b"/><path d="M29.8 27.7h2.2v-2.2h2v4.2h-4.2z" fill="#434345"/><rect x="35.5" y="23.5" width="4" height="4" fill="#1a1a1b"/><path d="M37.3 27.7h2.2v-2.2h2v4.2h-4.2z" fill="#434345"/><rect x="43.0" y="23.5" width="4" height="4" fill="#1a1a1b"/><path d="M44.8 27.7h2.2v-2.2h2v4.2h-4.2z" fill="#434345"/><rect x="50.5" y="23.5" width="4" height="4" fill="#1a1a1b"/><path d="M52.3 27.7h2.2v-2.2h2v4.2h-4.2z" fill="#434345"/><rect x="58.0" y="23.5" width="4" height="4" fill="#1a1a1b"/><path d="M59.8 27.7h2.2v-2.2h2v4.2h-4.2z" fill="#434345"/><rect x="13.0" y="31.9" width="4" height="4" fill="#1a1a1b"/><path d="M14.8 36.1h2.2v-2.2h2v4.2h-4.2z" fill="#434345"/><rect x="20.5" y="31.9" width="4" height="4" fill="#1a1a1b"/><path d="M22.3 36.1h2.2v-2.2h2v4.2h-4.2z" fill="#434345"/><rect x="28.0" y="31.9" width="4" height="4" fill="#1a1a1b"/><path d="M29.8 36.1h2.2v-2.2h2v4.2h-4.2z" fill="#434345"/><rect x="35.5" y="31.9" width="4" height="4" fill="#1a1a1b"/><path d="M37.3 36.1h2.2v-2.2h2v4.2h-4.2z" fill="#434345"/><rect x="43.0" y="31.9" width="4" height="4" fill="#1a1a1b"/><path d="M44.8 36.1h2.2v-2.2h2v4.2h-4.2z" fill="#434345"/><rect x="50.5" y="31.9" width="4" height="4" fill="#1a1a1b"/><path d="M52.3 36.1h2.2v-2.2h2v4.2h-4.2z" fill="#434345"/><rect x="58.0" y="31.9" width="4" height="4" fill="#1a1a1b"/><path d="M59.8 36.1h2.2v-2.2h2v4.2h-4.2z" fill="#434345"/><rect x="13.0" y="40.3" width="4" height="4" fill="#1a1a1b"/><path d="M14.8 44.5h2.2v-2.2h2v4.2h-4.2z" fill="#434345"/><rect x="20.5" y="40.3" width="4" height="4" fill="#1a1a1b"/><path d="M22.3 44.5h2.2v-2.2h2v4.2h-4.2z" fill="#434345"/><rect x="28.0" y="40.3" width="4" height="4" fill="#1a1a1b"/><path d="M29.8 44.5h2.2v-2.2h2v4.2h-4.2z" fill="#434345"/><rect x="35.5" y="40.3" width="4" height="4" fill="#1a1a1b"/><path d="M37.3 44.5h2.2v-2.2h2v4.2h-4.2z" fill="#434345"/><rect x="43.0" y="40.3" width="4" height="4" fill="#1a1a1b"/><path d="M44.8 44.5h2.2v-2.2h2v4.2h-4.2z" fill="#434345"/><rect x="50.5" y="40.3" width="4" height="4" fill="#1a1a1b"/><path d="M52.3 44.5h2.2v-2.2h2v4.2h-4.2z" fill="#434345"/><rect x="58.0" y="40.3" width="4" height="4" fill="#1a1a1b"/><path d="M59.8 44.5h2.2v-2.2h2v4.2h-4.2z" fill="#434345"/>
</pattern></defs>
<rect width="77" height="919" fill="#000"/><rect x="3" y="3" width="70" height="914" fill="url(#vg)"/><rect x="0" y="3" width="73" height="914" fill="url(#vp)"/></svg>
<div style="position:absolute;left:1900px;top:131px;width:6px;height:697px;background:#4a4a4a"></div>
<svg style="position:absolute;left:431px;top:1094px" width="1393" height="84" viewBox="0 0 1393 84"><defs>
<linearGradient id="hg" x1="0" x2="0" y1="0" y2="1"><stop offset="0" stop-color="#2a2a2c"/><stop offset=".5" stop-color="#303032"/><stop offset="1" stop-color="#2a2a2c"/></linearGradient>
<linearGradient id="pg" x1="0" x2="1" y1="0" y2="0"><stop offset="0" stop-color="#191919"/><stop offset=".45" stop-color="#272728"/><stop offset="1" stop-color="#1c1c1d"/></linearGradient><linearGradient id="hb" x1="0" x2="1" y1="0" y2="0"><stop offset="0" stop-color="#fff" stop-opacity=".04"/><stop offset=".3" stop-color="#000" stop-opacity=".1"/><stop offset=".55" stop-color="#000" stop-opacity=".08"/><stop offset="1" stop-color="#fff" stop-opacity=".04"/></linearGradient>
<pattern id="hp" x="30" y="0" width="60.03" height="84" patternUnits="userSpaceOnUse"><rect x="0" y="0" width="60.03" height="84" fill="url(#hb)"/>
<rect x="2" y="12.5" width="16" height="60" rx="8" fill="url(#pg)"/>
<path d="M1.4 19V66" stroke="#3c3c3e" stroke-width="1"/><path d="M5 72.8Q10 74.2 15 72.8" stroke="#434345" stroke-width="1.2" fill="none"/>
<rect x="30.0" y="13.3" width="4" height="4" fill="#1a1a1b"/><path d="M32.2 17.5h-2.2v-2.2h-2v4.2h4.2z" fill="#434345"/><rect x="39.0" y="13.3" width="4" height="4" fill="#1a1a1b"/><path d="M41.2 17.5h-2.2v-2.2h-2v4.2h4.2z" fill="#434345"/><rect x="48.0" y="13.3" width="4" height="4" fill="#1a1a1b"/><path d="M50.2 17.5h-2.2v-2.2h-2v4.2h4.2z" fill="#434345"/><rect x="30.0" y="21.9" width="4" height="4" fill="#1a1a1b"/><path d="M32.2 26.1h-2.2v-2.2h-2v4.2h4.2z" fill="#434345"/><rect x="39.0" y="21.9" width="4" height="4" fill="#1a1a1b"/><path d="M41.2 26.1h-2.2v-2.2h-2v4.2h4.2z" fill="#434345"/><rect x="48.0" y="21.9" width="4" height="4" fill="#1a1a1b"/><path d="M50.2 26.1h-2.2v-2.2h-2v4.2h4.2z" fill="#434345"/><rect x="30.0" y="30.4" width="4" height="4" fill="#1a1a1b"/><path d="M32.2 34.6h-2.2v-2.2h-2v4.2h4.2z" fill="#434345"/><rect x="39.0" y="30.4" width="4" height="4" fill="#1a1a1b"/><path d="M41.2 34.6h-2.2v-2.2h-2v4.2h4.2z" fill="#434345"/><rect x="48.0" y="30.4" width="4" height="4" fill="#1a1a1b"/><path d="M50.2 34.6h-2.2v-2.2h-2v4.2h4.2z" fill="#434345"/><rect x="30.0" y="39.0" width="4" height="4" fill="#1a1a1b"/><path d="M32.2 43.2h-2.2v-2.2h-2v4.2h4.2z" fill="#434345"/><rect x="39.0" y="39.0" width="4" height="4" fill="#1a1a1b"/><path d="M41.2 43.2h-2.2v-2.2h-2v4.2h4.2z" fill="#434345"/><rect x="48.0" y="39.0" width="4" height="4" fill="#1a1a1b"/><path d="M50.2 43.2h-2.2v-2.2h-2v4.2h4.2z" fill="#434345"/><rect x="30.0" y="47.5" width="4" height="4" fill="#1a1a1b"/><path d="M32.2 51.7h-2.2v-2.2h-2v4.2h4.2z" fill="#434345"/><rect x="39.0" y="47.5" width="4" height="4" fill="#1a1a1b"/><path d="M41.2 51.7h-2.2v-2.2h-2v4.2h4.2z" fill="#434345"/><rect x="48.0" y="47.5" width="4" height="4" fill="#1a1a1b"/><path d="M50.2 51.7h-2.2v-2.2h-2v4.2h4.2z" fill="#434345"/><rect x="30.0" y="56.0" width="4" height="4" fill="#1a1a1b"/><path d="M32.2 60.2h-2.2v-2.2h-2v4.2h4.2z" fill="#434345"/><rect x="39.0" y="56.0" width="4" height="4" fill="#1a1a1b"/><path d="M41.2 60.2h-2.2v-2.2h-2v4.2h4.2z" fill="#434345"/><rect x="48.0" y="56.0" width="4" height="4" fill="#1a1a1b"/><path d="M50.2 60.2h-2.2v-2.2h-2v4.2h4.2z" fill="#434345"/><rect x="30.0" y="64.6" width="4" height="4" fill="#1a1a1b"/><path d="M32.2 68.8h-2.2v-2.2h-2v4.2h4.2z" fill="#434345"/><rect x="39.0" y="64.6" width="4" height="4" fill="#1a1a1b"/><path d="M41.2 68.8h-2.2v-2.2h-2v4.2h4.2z" fill="#434345"/><rect x="48.0" y="64.6" width="4" height="4" fill="#1a1a1b"/><path d="M50.2 68.8h-2.2v-2.2h-2v4.2h4.2z" fill="#434345"/>
</pattern></defs>
<rect width="1393" height="84" fill="#000"/><rect x="3" y="3" width="1387" height="78" fill="url(#hg)"/><rect x="3" y="3" width="1387" height="78" fill="url(#hp)"/></svg>
<div style="position:absolute;left:713px;top:1178px;width:391px;height:6.5px;background:linear-gradient(#3c3c3c,#4f4f4f 40%,#4a4a4a 70%,#363636)"></div>
<div class="b" style="left:1830px;top:1050px;width:77px;height:137px;background:#111"></div>
<div style="position:absolute;left:1838px;top:1058px;width:61px;height:120px;border-radius:2px;
background:radial-gradient(ellipse 90% 75% at 50% 50%,#2ff5c1 0%,#25e2af 45%,#15c294 80%,#0aa57c 100%);box-shadow:inset 0 0 5px 1px rgba(0,90,60,.5)"></div>
<div class="t" style="left:1845.93px;top:1079.89px;font-size:23.29px;transform:scaleX(0.938);color:#0a4b3c;-webkit-text-stroke:0.3px;">QNT</div>
<div class="t" style="left:1861.91px;top:1107.66px;font-size:23.44px;transform:scaleX(1.000);color:#0a4b3c;-webkit-text-stroke:0.3px;">4</div>
<div class="t" style="left:1855.94px;top:1135.52px;font-size:23.73px;transform:scaleX(0.973);color:#0a4b3c;-webkit-text-stroke:0.3px;">16</div>
</body></html>
